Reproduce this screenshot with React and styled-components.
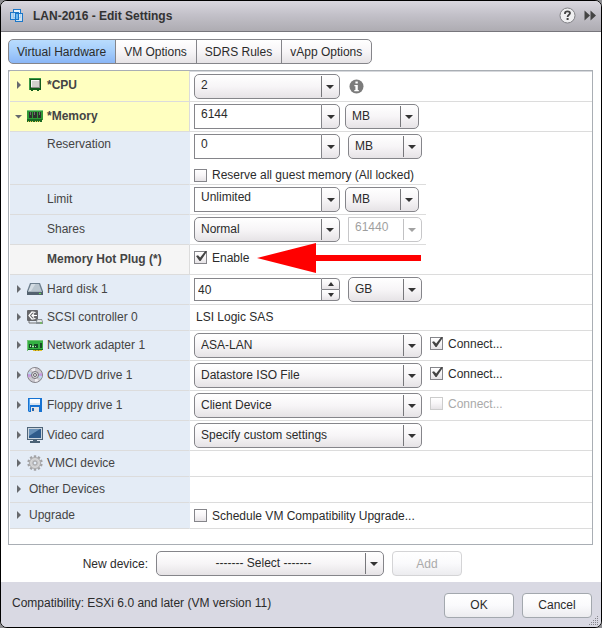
import React, { useState } from 'react';
import styled, { createGlobalStyle, css } from 'styled-components';

const GlobalStyle = createGlobalStyle`
  * {
    box-sizing: border-box;
  }

  body {
    margin: 0;
    background: #8c8c90;
  }

  body, button, input, select {
    font-family: "Liberation Sans", Arial, sans-serif;
    font-size: 12px;
    color: #2b2b2b;
  }
`;

const raised = css`
  background: linear-gradient(#ffffff 0%, #f7f5f7 50%, #e6e3e6 100%);
`;

const Dialog = styled.main`
  background: white;
  border: 1px solid #000;
  border-radius: 7px;
  overflow: hidden;
`;

const Header = styled.header`
  display: flex;
  align-items: center;
  gap: 8px;
  height: 31px;
  padding: 0 5px 0 8px;
  background: linear-gradient(#d9d7df 0%, #c3c1c9 45%, #aeacb2 100%);
  border-bottom: 1px solid #77767c;
`;

const Title = styled.h1`
  flex: 1;
  margin: 0;
  font-size: 12px;
  line-height: 16px;
  color: #333;
`;

const HeaderButton = styled.button`
  display: flex;
  padding: 0 0 2px;
  border: none;
  background: none;
  cursor: pointer;
`;

const Body = styled.div`
  padding: 7px 8px 6px 7px;
`;

const Tabs = styled.nav`
  display: flex;
  margin-bottom: 6px;
`;

const Tab = styled.button`
  ${raised}
  height: 25px;
  padding: 0 9px 0 8px;
  border: 1px solid #85858a;
  margin-left: -1px;
  white-space: nowrap;
  cursor: pointer;

  ${props => props.$active && css`
    background: linear-gradient(#b9dcfd 0%, #a4cdfb 50%, #8ab6f6 100%);
  `}

  &:first-child {
    margin-left: 0;
    border-radius: 5px 0 0 5px;
  }

  &:last-child {
    border-radius: 0 5px 5px 0;
  }
`;

const Panel = styled.section`
  padding: 0 0 15px 1px;
  border: 1px solid #a9aeb4;
  box-shadow: inset 0 1px 0 #d6d8dc;
`;

const Row = styled.div`
  display: grid;
  grid-template-columns: 180px 1fr;
  min-height: ${props => props.$height || 30}px;
`;

const labelColors = {
  changed: '#ffffc0',
  normal: '#e4ecf6',
  marked: '#f5f5f5',
};

const LabelCell = styled.div`
  display: flex;
  align-items: ${props => (props.$top ? 'flex-start' : 'center')};
  padding: ${props => (props.$top ? '4px 0 0' : '0 0 2px')};
  padding-left: ${props => (props.$nested ? 37 : 5)}px;
  background: ${props => labelColors[props.$kind || 'normal']};
  border-bottom: 1px solid #dcdcdc;
  border-right: 1px solid ${props => (props.$kind ? '#dcdcdc' : '#e4ecf6')};
  font-weight: ${props => (props.$kind ? 'bold' : 'normal')};
  line-height: 16px;
  color: #444;
`;

const ValueCell = styled.div`
  display: flex;
  flex-wrap: wrap;
  align-items: ${props => (props.$top ? 'flex-start' : 'center')};
  align-content: ${props => (props.$top ? 'flex-start' : 'center')};
  gap: ${props => props.$gap || 8}px;
  padding: ${props => (props.$top ? '2px' : '0')} 0 0 4px;
  max-width: ${props => (props.$narrow ? '236px' : 'none')};
  border-bottom: 1px solid #dcdcdc;
`;

const Toggle = styled.button`
  display: flex;
  align-items: center;
  width: 12px;
  height: 16px;
  padding: 0;
  border: none;
  background: none;
  cursor: pointer;
`;

const IconBox = styled.span`
  display: flex;
  width: 16px;
  margin-right: 4px;
`;

const PlainLabel = styled.span`
  margin-left: 2px;
`;

const SelectBox = styled.span`
  position: relative;
  display: inline-flex;
  width: ${props => props.$width}px;
  height: 25px;
  opacity: ${props => (props.$disabled ? 0.45 : 1)};

  &::before {
    content: '';
    position: absolute;
    top: 2px;
    bottom: 2px;
    right: 18px;
    border-left: 1px solid #77777b;
    pointer-events: none;
  }

  &::after {
    content: '';
    position: absolute;
    top: 11px;
    right: 6px;
    border: 4px solid transparent;
    border-top-color: #333;
    border-bottom-width: 0;
    pointer-events: none;
  }
`;

const StyledSelect = styled.select`
  ${raised}
  appearance: none;
  width: 100%;
  padding: 0 19px 2px 6px;
  border: 1px solid #85858a;
  border-radius: ${props => (props.$square ? '0 5px 5px 0' : '5px')};
  text-align-last: ${props => (props.$center ? 'center' : 'left')};
  opacity: 1;

  ${props => props.$square && css`
    background: white;
    padding-bottom: 5px;
  `}
`;

const ComboBox = styled.span`
  display: inline-flex;
  width: 146px;
  height: ${props => props.$height || 25}px;
`;

const TextInput = styled.input`
  flex: 1;
  min-width: 0;
  padding: ${props => (props.$plain ? '0 3px' : '0 6px 5px')};
  border: 1px solid #85858a;
  border-right: none;
  border-radius: 0;
  background: white;
`;

const ComboButton = styled.button`
  ${raised}
  display: flex;
  align-items: center;
  justify-content: center;
  width: 19px;
  padding: 0;
  border: 1px solid #85858a;
  border-radius: 0 5px 5px 0;
`;

const Spinner = styled.span`
  display: flex;
  flex-direction: column;
  width: 19px;
`;

const SpinButton = styled.button`
  ${raised}
  display: flex;
  flex: 1;
  align-items: center;
  justify-content: center;
  padding: 0;
  border: 1px solid #85858a;

  &:first-child {
    border-radius: 0 4px 0 0;
  }

  &:last-child {
    border-top: none;
    border-radius: 0 0 4px 0;
  }
`;

const CheckLabel = styled.label`
  display: inline-flex;
  align-items: center;
  gap: 5px;
  padding-bottom: ${props => (props.$lifted ? 4 : 0)}px;
  line-height: 16px;
  color: ${props => (props.$disabled ? '#aaa' : '#2b2b2b')};
`;

const CheckInput = styled.input`
  ${raised}
  appearance: none;
  position: relative;
  width: 13px;
  height: 13px;
  margin: 0;
  border: 1px solid #85858a;

  &:disabled {
    border-color: #ccc;
  }

  &:checked::after {
    content: '';
    position: absolute;
    top: -1px;
    left: 1px;
    width: 11px;
    height: 10px;
    background: #444;
    clip-path: polygon(0 50%, 18% 42%, 38% 66%, 84% 0, 100% 6%, 42% 100%, 32% 100%);
  }
`;

const StaticText = styled.span`
  padding: 0 0 2px 2px;
  line-height: 16px;
`;

const NewDevice = styled.div`
  display: grid;
  grid-template-columns: 139px auto auto 1fr;
  align-items: center;
  column-gap: 8px;
  padding-left: 1px;
  margin-top: 6px;
`;

const NewDeviceLabel = styled.label`
  text-align: right;
`;

const Button = styled.button`
  background: linear-gradient(#ffffff 0%, #fafafc 50%, #ececef 100%);
  width: 70px;
  height: 25px;
  padding: 0;
  border: 1px solid #a3a8ae;
  border-radius: 4px;
  cursor: pointer;

  &:disabled {
    color: #aaa;
    border-color: #d4d4d6;
    cursor: default;
  }
`;

const Footer = styled.footer`
  position: relative;
  display: flex;
  align-items: center;
  gap: 8px;
  height: 45px;
  padding: 1px 9px 0 11px;
  background: #d9d9e3;
`;

const Compatibility = styled.p`
  flex: 1;
  margin: 0 0 4px;
  line-height: 16px;
`;

const Grip = styled.svg`
  position: absolute;
  right: 3px;
  bottom: 2px;
`;

const Pointer = styled.svg`
  margin: -3px 0 1px;
`;

const WindowsIcon = () => (
  <svg width="16" height="16" viewBox="0 0 16 16" fill="none">
    <rect x="4.5" y="1.5" width="7" height="8" fill="#e3f2fd" stroke="#1b77c9" />
    <rect x="1.5" y="4.500" width="8" height="7" fill="#b4daf8" fillOpacity=".8" stroke="#1b77c9" />
    <rect x="6.5" y="5.5" width="7" height="8" fill="#d3ebfc" fillOpacity=".8" stroke="#1b77c9" />
    <rect x="6.5" y="5.5" width="3" height="6" fill="#6db8f0" stroke="#1b77c9" />
  </svg>
);

const HelpIcon = () => (
  <svg width="17" height="17" viewBox="0 0 17 17" fill="none">
    <circle cx="8.5" cy="8.5" r="7.5" fill="#efeff1" stroke="#808085" />
    <path d="M6 7V6.2C6 5 7 4.3 8.5 4.3S11 5 11 6.2C11 7.7 8.6 7.8 8.6 10" stroke="#444" strokeWidth="1.8" />
    <rect x="7.6" y="11" width="2" height="2" fill="#444" />
  </svg>
);

const ForwardIcon = () => (
  <svg width="12" height="11" viewBox="0 0 12 11">
    <path d="M0.5 0.5L6 5.5L0.5 10.5ZM6.5 0.5L12 5.5L6.5 10.5Z" fill="#444" />
  </svg>
);

const InfoIcon = () => (
  <svg width="15" height="15" viewBox="0 0 15 15">
    <circle cx="7.5" cy="7.5" r="7" fill="#7b7b7b" />
    <path d="M6.4 2.5h2.4v2.1H6.4zM5.4 6h3.4v5h1v1.3H5.3V11h1.1V7.2h-1z" fill="#fff" />
  </svg>
);

const arrowShapes = {
  right: 'M2 0L6 4L2 8Z',
  open: 'M0 3H7L3.5 6.5Z',
  down: 'M0 2H8L4 6Z',
  smallDown: 'M1 2H7L4 6Z',
  smallUp: 'M1 6H7L4 2Z',
};

const ArrowIcon = ({ direction = 'right' }) => (
  <svg width="8" height="8" viewBox="0 0 8 8">
    <path
      d={arrowShapes[direction]}
      fill={direction === 'right' || direction === 'open' ? '#66696d' : '#333'}
    />
  </svg>
);

const CpuIcon = () => (
  <svg width="16" height="16" viewBox="0 0 16 16">
    <path d="M2 1h12v12h-2v1h-2v-1H6v1H4v-1H2z" fill="#125c1b" />
    <path d="M2 1h12v1H3v11H2z" fill="#3b9944" />
    <path d="M4 3h9v8H4z" fill="#8d8d89" />
    <path d="M4 3h8v7H4z" fill="#f7f7f5" />
    <path d="M5 4h7v6H5z" fill="#d2d1cd" />
  </svg>
);

const MemoryIcon = () => (
  <svg width="16" height="16" viewBox="0 0 16 16">
    <path d="M0 2h16v10h-1v2H0z" fill="#2f9a37" />
    <path d="M0 2h16v1H0z" fill="#7cc97e" />
    <path d="M0 11h15v3H0z" fill="#1b6a23" />
    <path d="M1 13h1v1H1zM3 13h1v1H3zM5 13h1v1H5zM8 13h1v1H8zM10 13h1v1h-1zM12 13h1v1h-1z" fill="#e3cd52" />
    <path d="M2 4h3v6H2zM6 4h4v6H6zM11 4h3v6h-3z" fill="#2d302d" />
    <path d="M3 4h1v3H3zM7 4h1v3H7zM12 4h1v3h-1z" fill="#6d706d" />
  </svg>
);

const DiskIcon = () => (
  <svg width="16" height="16" viewBox="0 0 16 16">
    <path d="M3 2h10l3 8v4H0v-4z" fill="#6d7f8e" />
    <path d="M4 3h8l2.5 7h-13z" fill="#b9c5ce" />
    <path d="M4.500 3h4L4 10H1.500z" fill="#d3dce3" />
    <path d="M0 10h16v4H0z" fill="#53626f" />
    <path d="M1 10h14v1H1z" fill="#a8b5be" />
    <path d="M12 12h2v1h-2z" fill="#62df49" />
  </svg>
);

const ScsiIcon = () => (
  <svg width="16" height="16" viewBox="0 0 16 16">
    <rect x="0" y="1" width="11" height="11" rx="1" fill="#66676a" />
    <path d="M8.5 3.5L5 3L2 6.5L5 10L8.5 9.5M4.5 6.5H10M7 4.5L5 6.5L7 8.5" fill="none" stroke="#fff" strokeWidth="1.2" />
    <path d="M2 12v2h8" fill="none" stroke="#727272" />
    <path d="M10 10h5l1 3v2H9v-2z" fill="#8a9298" />
    <path d="M10.5 11h4l.5 2h-5z" fill="#e4e7e8" />
    <path d="M13 13.5h2v1h-2z" fill="#65da3b" />
  </svg>
);

const NetworkIcon = () => (
  <svg width="16" height="16" viewBox="0 0 16 16">
    <path d="M0 3h16v10H0z" fill="#34b043" />
    <path d="M0 3h16v1H1v10H0z" fill="#73c477" />
    <path d="M1 12h15v1H1z" fill="#176e24" />
    <path d="M6 13h9v1H6z" fill="#e5c32d" />
    <path d="M8 13h1v1H8zM11 13h1v1h-1z" fill="#9f8519" />
    <path d="M2 7h3v4H2zM7 7h4v4H7zM13 6h2v5h-2z" fill="#174b27" />
    <path d="M3 8h1v2H3zM8 9h1v1H8zM5 9h2v1H5z" fill="#b7ddb8" />
  </svg>
);

const DiscIcon = () => (
  <svg width="16" height="16" viewBox="0 0 16 16">
    <circle cx="8" cy="8" r="7.5" fill="#cbc8cf" stroke="#858389" />
    <path d="M8 8L1 6.5V10.5ZM8 8L15 6V10Z" fill="#c69ae0" />
    <path d="M8 8L2 4.5L1 7ZM8 8L14 12L15 9Z" fill="#b9d8ee" />
    <path d="M8 8L4 2L8 1ZM8 8L8 15L11.5 14Z" fill="#efedf0" />
    <circle cx="8" cy="8" r="3.5" fill="#dddce0" stroke="#77757c" />
    <circle cx="8" cy="8" r="1.5" fill="#f5f5f6" stroke="#66646a" />
  </svg>
);

const FloppyIcon = () => (
  <svg width="16" height="16" viewBox="0 0 16 16">
    <path d="M1 1h14v14H2l-1-1z" fill="#1672d2" />
    <path d="M2 2h1v12H2z" fill="#5ba9ef" />
    <path d="M3 2h10v6H3z" fill="#f8fbfe" />
    <path d="M3 6h10v2H3z" fill="#d5e3f1" />
    <path d="M4 10h8v5H4z" fill="#e5e5e7" />
    <path d="M5 11h2v3H5z" fill="#2465ad" />
  </svg>
);

const MonitorIcon = () => (
  <svg width="16" height="16" viewBox="0 0 16 16">
    <path d="M0 0h16v13H0z" fill="#4f6579" />
    <path d="M1 1h14v11H1z" fill="#cbd5de" />
    <path d="M2 2h12v9H2z" fill="#2f5b8b" />
    <path d="M2 2h11L2 9z" fill="#6790b8" />
    <path d="M6 13h4v1H6zM3 14h10v2H3z" fill="#4a6175" />
  </svg>
);

const GearIcon = () => (
  <svg width="16" height="16" viewBox="0 0 16 16">
    {[0, 36, 72, 108, 144].map(angle => (
      <rect key={angle} x="6.8" y="0.3" width="2.4" height="15.4" fill="#a2a2a4" transform={`rotate(${angle} 8 8)`} />
    ))}
    <circle cx="8" cy="8" r="5.5" fill="#d6d6d7" stroke="#acacae" />
    <circle cx="8" cy="8" r="3.5" fill="#c8c8ca" />
    <circle cx="8" cy="8" r="2" fill="#e4ecf6" stroke="#a0a0a2" />
  </svg>
);

const Select = ({ width, label, value, options = [], disabled, square, center, id }) => (
  <SelectBox $width={width} $disabled={disabled}>
    <StyledSelect
      id={id}
      aria-label={label}
      defaultValue={value}
      disabled={disabled}
      $square={square}
      $center={center}
    >
      {[value, ...options].map(option => <option key={option}>{option}</option>)}
    </StyledSelect>
  </SelectBox>
);

const Combo = ({ label, value }) => (
  <ComboBox>
    <TextInput type="text" aria-label={label} defaultValue={value} />
    <ComboButton aria-label={`${label} values`}><ArrowIcon direction="down" /></ComboButton>
  </ComboBox>
);

const Check = ({ children, checked, disabled, lifted }) => (
  <CheckLabel $disabled={disabled} $lifted={lifted}>
    <CheckInput type="checkbox" defaultChecked={checked} disabled={disabled} />
    {children}
  </CheckLabel>
);

const DeviceRow = ({ name, icon, kind, height, gap, open, children }) => (
  <Row $height={height}>
    <LabelCell $kind={kind}>
      <Toggle aria-label={`Toggle ${name}`} aria-expanded={!!open}>
        <ArrowIcon direction={open ? 'open' : 'right'} />
      </Toggle>
      {icon ? <><IconBox>{icon}</IconBox>{name}</> : <PlainLabel>{name}</PlainLabel>}
    </LabelCell>
    <ValueCell $gap={gap}>{children}</ValueCell>
  </Row>
);

const tabs = ['Virtual Hardware', 'VM Options', 'SDRS Rules', 'vApp Options'];

const App = () => {
  const [activeTab, setActiveTab] = useState(tabs[0]);

  return (
    <Dialog>
      <GlobalStyle />
      <Header>
        <WindowsIcon />
        <Title>LAN-2016 - Edit Settings</Title>
        <HeaderButton aria-label="Help"><HelpIcon /></HeaderButton>
        <HeaderButton aria-label="Expand"><ForwardIcon /></HeaderButton>
      </Header>

      <Body>
        <Tabs>
          {tabs.map(tab => (
            <Tab key={tab} $active={tab === activeTab} onClick={() => setActiveTab(tab)}>
              {tab}
            </Tab>
          ))}
        </Tabs>

        <Panel>
          <DeviceRow name="*CPU" icon={<CpuIcon />} kind="changed" height={31} gap={9}>
            <Select width={146} label="CPU" value="2" options={['1', '4']} />
            <InfoIcon />
          </DeviceRow>
          <DeviceRow name="*Memory" icon={<MemoryIcon />} kind="changed" gap={5} open>
            <Combo label="Memory" value="6144" />
            <Select width={74} label="Memory unit" value="MB" options={['GB']} />
          </DeviceRow>

          {/* memory details */}
          <Row $height={53}>
            <LabelCell $nested $top>Reservation</LabelCell>
            <ValueCell $narrow $top>
              <Combo label="Reservation" value="0" />
              <Select width={74} label="Reservation unit" value="MB" options={['GB']} />
              <Check>Reserve all guest memory (All locked)</Check>
            </ValueCell>
          </Row>
          <Row>
            <LabelCell $nested>Limit</LabelCell>
            <ValueCell $narrow $gap={5}>
              <Combo label="Limit" value="Unlimited" />
              <Select width={74} label="Limit unit" value="MB" options={['GB']} />
            </ValueCell>
          </Row>
          <Row>
            <LabelCell $nested>Shares</LabelCell>
            <ValueCell $narrow>
              <Select width={146} label="Shares" value="Normal" options={['Low', 'High']} />
              <Select width={74} label="Shares value" value="61440" disabled square />
            </ValueCell>
          </Row>
          <Row>
            <LabelCell $nested $kind="marked">Memory Hot Plug (*)</LabelCell>
            <ValueCell>
              <Check checked lifted>Enable</Check>
              <Pointer width="164" height="30" viewBox="0 0 164 30">
                <path d="M0 15L59 0V12H164V18H59V30Z" fill="#f00" />
              </Pointer>
            </ValueCell>
          </Row>

          <DeviceRow name="Hard disk 1" icon={<DiskIcon />}>
            <ComboBox $height={23}>
              <TextInput type="text" aria-label="Hard disk size" defaultValue="40" $plain />
              <Spinner>
                <SpinButton aria-label="Increase"><ArrowIcon direction="smallUp" /></SpinButton>
                <SpinButton aria-label="Decrease"><ArrowIcon direction="smallDown" /></SpinButton>
              </Spinner>
            </ComboBox>
            <Select width={74} label="Hard disk unit" value="GB" options={['MB', 'TB']} />
          </DeviceRow>
          <DeviceRow name="SCSI controller 0" icon={<ScsiIcon />} height={26}>
            <StaticText>LSI Logic SAS</StaticText>
          </DeviceRow>
          <DeviceRow name="Network adapter 1" icon={<NetworkIcon />}>
            <Select width={228} label="Network" value="ASA-LAN" />
            <Check checked lifted>Connect...</Check>
          </DeviceRow>
          <DeviceRow name="CD/DVD drive 1" icon={<DiscIcon />}>
            <Select width={228} label="CD/DVD source" value="Datastore ISO File" />
            <Check checked lifted>Connect...</Check>
          </DeviceRow>
          <DeviceRow name="Floppy drive 1" icon={<FloppyIcon />}>
            <Select width={228} label="Floppy source" value="Client Device" />
            <Check disabled lifted>Connect...</Check>
          </DeviceRow>
          <DeviceRow name="Video card" icon={<MonitorIcon />}>
            <Select width={228} label="Video card" value="Specify custom settings" />
          </DeviceRow>
          <DeviceRow name="VMCI device" icon={<GearIcon />} height={26} />
          <DeviceRow name="Other Devices" height={26} />
          <DeviceRow name="Upgrade" height={26}>
            <Check>Schedule VM Compatibility Upgrade...</Check>
          </DeviceRow>
        </Panel>

        <NewDevice>
          <NewDeviceLabel htmlFor="new-device">New device:</NewDeviceLabel>
          <Select id="new-device" width={228} value="------- Select -------" center />
          <Button disabled>Add</Button>
        </NewDevice>
      </Body>

      <Footer>
        <Compatibility>Compatibility: ESXi 6.0 and later (VM version 11)</Compatibility>
        <Button>OK</Button>
        <Button>Cancel</Button>
        <Grip width="9" height="9" viewBox="0 0 9 9" fill="#85858c">
          <path d="M8 0h1v1H8zM6 2h1v1H6zM8 2h1v1H8zM4 4h1v1H4zM6 4h1v1H6zM8 4h1v1H8zM2 6h1v1H2zM4 6h1v1H4zM6 6h1v1H6zM8 6h1v1H8zM0 8h1v1H0zM2 8h1v1H2zM4 8h1v1H4zM6 8h1v1H6zM8 8h1v1H8z" />
        </Grip>
      </Footer>
    </Dialog>
  );
};

export default App;
